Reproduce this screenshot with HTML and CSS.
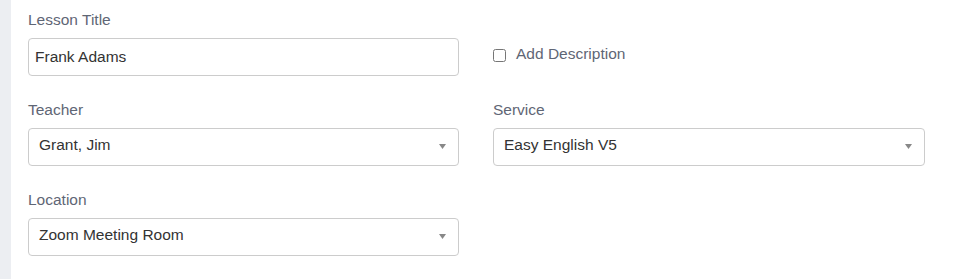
FILE: index.html
```html
<!DOCTYPE html>
<html lang="en">
<head>
    <meta charset="UTF-8">
    <meta name="viewport" content="width=device-width, initial-scale=1.0">
    <title>Lesson Details</title>
    <link rel="stylesheet" href="styles.css">
</head>
<body>
    <div class="page">
        <div class="sidebar"></div>
        <form class="lesson-form">
            <div class="field">
                <label class="field-label" for="lesson-title">Lesson Title</label>
                <input type="text" id="lesson-title" class="text-input" value="Frank Adams">
            </div>
            <div class="field field-check">
                <label class="check-label">
                    <input type="checkbox" class="checkbox">
                    <span>Add Description</span>
                </label>
            </div>

            <div class="field">
                <div class="field-label">Teacher</div>
                <div class="select-box">
                    <span class="select-text">Grant, Jim</span>
                    <svg class="caret" width="7" height="5" viewBox="0 0 7 5"><path d="M0 0H7L3.5 5Z" fill="#888"/></svg>
                </div>
            </div>
            <div class="field">
                <div class="field-label">Service</div>
                <div class="select-box">
                    <span class="select-text">Easy English V5</span>
                    <svg class="caret" width="7" height="5" viewBox="0 0 7 5"><path d="M0 0H7L3.5 5Z" fill="#888"/></svg>
                </div>
            </div>

            <div class="field">
                <div class="field-label">Location</div>
                <div class="select-box">
                    <span class="select-text">Zoom Meeting Room</span>
                    <svg class="caret" width="7" height="5" viewBox="0 0 7 5"><path d="M0 0H7L3.5 5Z" fill="#888"/></svg>
                </div>
            </div>
        </form>
    </div>
</body>
</html>
```

FILE: styles.css
```css
body {
  margin: 0;
  padding: 0;
  background-color: #fff;
  font-family: "Liberation Sans", Arial, sans-serif;
  font-size: 15.5px;
}

.page {
  display: flex;
  height: 279px;
}

.sidebar {
  width: 11px;
  background-color: #eceef2;
}

.lesson-form {
  display: grid;
  grid-template-columns: 431px 432px;
  column-gap: 34px;
  row-gap: 24px;
  align-content: start;
  padding: 10px 0 0 17px;
}

.field {
  display: flex;
  flex-direction: column;
}

.field-label {
  line-height: 20px;
  margin-bottom: 8px;
  color: #5f6675;
}

.text-input {
  box-sizing: border-box;
  height: 38px;
  margin: 0;
  padding: 0 6px;
  border: 1px solid #ccc;
  border-radius: 4px;
  font-family: inherit;
  font-size: 15.5px;
  color: #333;
}

.field-check {
  padding-top: 34px;
}

.check-label {
  display: flex;
  align-items: flex-start;
  line-height: 20px;
  color: #5f6675;
}

.checkbox {
  width: 13px;
  height: 13px;
  margin: 5px 10px 0 0;
}

.select-box {
  box-sizing: border-box;
  display: flex;
  align-items: center;
  justify-content: space-between;
  height: 38px;
  padding: 0 12px 0 10px;
  border: 1px solid #ccc;
  border-radius: 4px;
  color: #333;
}

.select-text {
  padding-bottom: 5px;
}

.caret {
  margin-top: -1px;
}
```
